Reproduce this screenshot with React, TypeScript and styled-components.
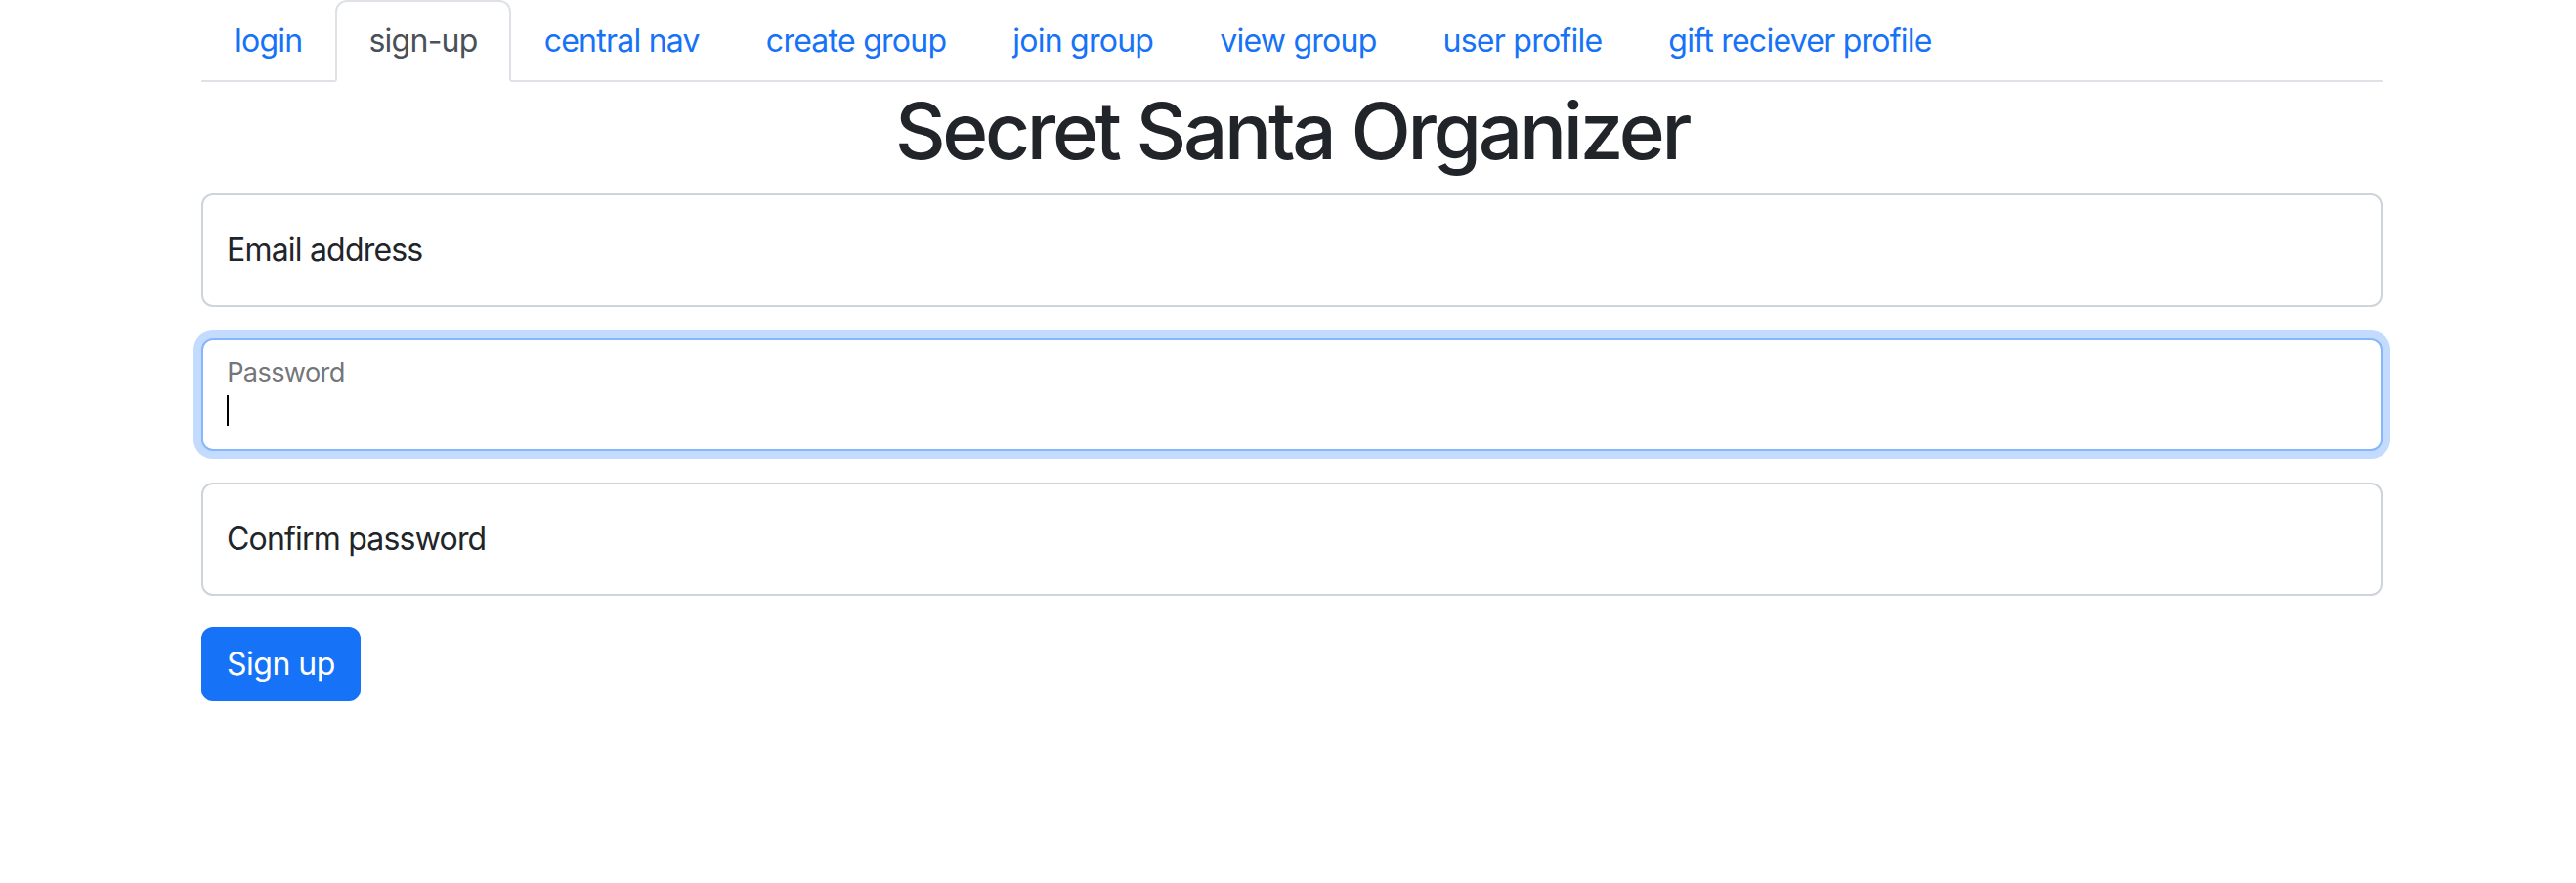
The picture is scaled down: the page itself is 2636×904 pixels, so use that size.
import React from "react";
import styled, { createGlobalStyle, css } from "styled-components";

const Global = createGlobalStyle`
  * { box-sizing: border-box; }
  body {
    margin: 0;
    font-family: Inter, "Liberation Sans", Arial, sans-serif;
    font-size: 32px;
    line-height: 1.5;
    color: #212529;
    background: #fff;
  }
`;

const Container = styled.div`
  width: 2280px;
  margin: 0 auto;
  padding: 0 20px 0 28px;
`;

const Tabs = styled.nav`
  display: flex;
  flex-wrap: wrap;
  border-bottom: 2px solid #dee2e6;
`;

const Tab = styled.a<{ $active?: boolean }>`
  display: block;
  padding: 16px 32px;
  font-size: 32px;
  line-height: 48px;
  letter-spacing: -0.75px;
  color: #1672f6;
  text-decoration: none;
  border: 2px solid transparent;
  border-top-left-radius: 12px;
  border-top-right-radius: 12px;
  margin-bottom: -2px;
  cursor: pointer;
  ${(p) =>
    p.$active &&
    css`
      color: #495057;
      background: #fff;
      border-color: #dee2e6 #dee2e6 #fff;
    `}
`;

const Title = styled.h1`
  margin: 2px 0 16px;
  font-size: 80px;
  font-weight: 500;
  line-height: 1.2;
  letter-spacing: -3.3px;
  text-align: center;
  color: #212529;
`;

const Form = styled.form`
  display: flex;
  flex-direction: column;
`;

const Floating = styled.div`
  position: relative;
  margin-bottom: 32px;
`;

const Input = styled.input<{ $focused?: boolean }>`
  display: block;
  width: 100%;
  height: 116px;
  padding: 52px 24px 20px;
  font-family: inherit;
  font-size: 32px;
  line-height: 1.25;
  color: #212529;
  caret-color: #000;
  background: #fff;
  border: 2px solid #ced4da;
  border-radius: 12px;
  outline: none;
  ${(p) =>
    p.$focused &&
    css`
      border-color: #86b7fe;
      box-shadow: 0 0 0 8px rgba(13, 110, 253, 0.25);
    `}
`;

const Label = styled.label<{ $floated?: boolean }>`
  position: absolute;
  top: 0;
  left: 0;
  height: 100%;
  padding: 32px 24px;
  border: 2px solid transparent;
  font-size: 32px;
  line-height: 48px;
  letter-spacing: -0.8px;
  pointer-events: none;
  transform-origin: 0 0;
  white-space: nowrap;
  color: #212529;
  ${(p) =>
    p.$floated &&
    css`
      color: rgba(33, 37, 41, 0.65);
      transform: scale(0.85) translateY(-16px) translateX(4.8px);
    `}
`;

const Caret = styled.span`
  position: absolute;
  left: 26px;
  top: 58px;
  width: 2px;
  height: 32px;
  background: #000;
  pointer-events: none;
`;

const Button = styled.button`
  align-self: flex-start;
  padding: 12px 24px;
  font-family: inherit;
  font-size: 32px;
  line-height: 48px;
  letter-spacing: -0.5px;
  color: #fff;
  background: #1672f6;
  border: 2px solid #1672f6;
  border-radius: 12px;
  cursor: pointer;
`;

const tabs = [
  "login",
  "sign-up",
  "central nav",
  "create group",
  "join group",
  "view group",
  "user profile",
  "gift reciever profile",
];

export default function App() {
  return (
    <>
      <Global />
      <Container>
        <Tabs>
          {tabs.map((t) => (
            <Tab key={t} $active={t === "sign-up"}>
              {t}
            </Tab>
          ))}
        </Tabs>
        <Title>Secret Santa Organizer</Title>
        <Form onSubmit={(e) => e.preventDefault()}>
          <Floating>
            <Input id="email" type="email" />
            <Label htmlFor="email">Email address</Label>
          </Floating>
          <Floating>
            <Input id="password" type="password" $focused />
            <Label htmlFor="password" $floated>
              Password
            </Label>
            <Caret />
          </Floating>
          <Floating>
            <Input id="confirm" type="password" />
            <Label htmlFor="confirm">Confirm password</Label>
          </Floating>
          <Button type="submit">Sign up</Button>
        </Form>
      </Container>
    </>
  );
}
